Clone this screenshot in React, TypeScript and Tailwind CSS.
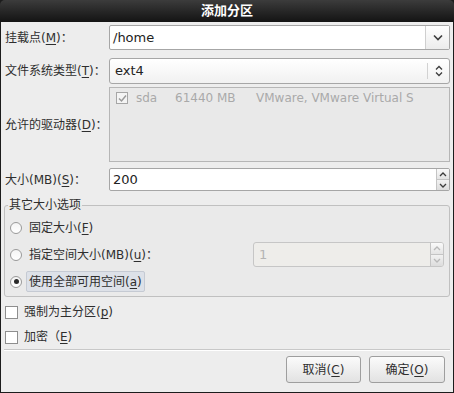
import { useState } from 'react'

const font = { fontFamily: '"DejaVu Sans", "Noto Sans CJK SC", sans-serif' }

function U({ c }: { c: string }) {
  return <span className="underline underline-offset-2">{c}</span>
}

function ChevDown() {
  return (
    <svg width="10" height="7" viewBox="0 0 10 7">
      <path d="M1 1.5 L5 5.5 L9 1.5" fill="none" stroke="#3c3c3c" strokeWidth="1.6" />
    </svg>
  )
}

function ChevUpDown({ color = '#3c3c3c' }: { color?: string }) {
  return (
    <svg width="8" height="12" viewBox="0 0 8 12">
      <path d="M1 4.5 L4 1.5 L7 4.5 M1 7.5 L4 10.5 L7 7.5" fill="none" stroke={color} strokeWidth="1.3" />
    </svg>
  )
}

function Spin({ disabled }: { disabled?: boolean }) {
  const c = disabled ? '#b8b8b8' : '#3c3c3c'
  return (
    <div className="flex flex-col w-[13px] h-full border-l border-[#c4c4c4]">
      <div className="flex-1 flex items-center justify-center bg-gradient-to-b from-[#fafafa] to-[#e4e4e4] border-b border-[#c4c4c4]">
        <svg width="8" height="5" viewBox="0 0 8 5"><path d="M1 4 L4 1 L7 4" fill="none" stroke={c} strokeWidth="1.3" /></svg>
      </div>
      <div className="flex-1 flex items-center justify-center bg-gradient-to-b from-[#f2f2f2] to-[#dcdcdc]">
        <svg width="8" height="5" viewBox="0 0 8 5"><path d="M1 1 L4 4 L7 1" fill="none" stroke={c} strokeWidth="1.3" /></svg>
      </div>
    </div>
  )
}

function Radio({ checked }: { checked?: boolean }) {
  return (
    <span className="w-[12px] h-[12px] rounded-full border border-[#9a9a9a] bg-gradient-to-b from-[#f4f4f4] to-white flex items-center justify-center shrink-0">
      {checked && <span className="w-[5px] h-[5px] rounded-full bg-[#2a2a2a]" />}
    </span>
  )
}

function Check() {
  return <span className="w-[13px] h-[13px] border border-[#8e8e8e] bg-white shrink-0" />
}

export default function App() {
  const [mount] = useState('/home')
  return (
    <div style={font} className="w-[454px] h-[393px] flex flex-col bg-[#1c1c1c] text-[12px] text-[#2e2e2e]">
      <div className="h-[22px] shrink-0 rounded-t-[5px] bg-gradient-to-b from-[#3c3c3c] to-[#141414] flex items-center justify-center text-white font-bold text-[13px]">
        添加分区
      </div>

      <div className="flex-1 flex flex-col bg-[#ededed] mx-px mb-px px-[3px]">
        {/* 挂载点 */}
        <div className="mt-[3px] h-[25px] flex items-center">
          <div className="w-[105px] pl-px">挂载点(<U c="M" />)：</div>
          <div className="flex-1 h-full flex bg-white border border-[#a6a6a6] rounded-[2px]">
            <div className="flex-1 flex items-center pl-[3px] text-[13px] text-[#222]">{mount}</div>
            <div className="w-[24px] border-l border-[#cfcfcf] flex items-center justify-center bg-gradient-to-b from-white to-[#ececec]">
              <ChevDown />
            </div>
          </div>
        </div>

        {/* 文件系统类型 */}
        <div className="mt-[8px] h-[26px] flex items-center">
          <div className="w-[105px] pl-px">文件系统类型(<U c="T" />)：</div>
          <div className="flex-1 h-full flex bg-gradient-to-b from-white to-[#f1f1f1] border border-[#a6a6a6] rounded-[3px]">
            <div className="flex-1 flex items-center pl-[5px] text-[13px] text-[#222]">ext4</div>
            <div className="my-[4px] border-l border-[#d2d2d2]" />
            <div className="w-[21px] flex items-center justify-center">
              <ChevUpDown />
            </div>
          </div>
        </div>

        {/* 驱动器 */}
        <div className="mt-[3px] h-[75px] flex items-center">
          <div className="w-[105px] pl-px">允许的驱动器(<U c="D" />)：</div>
          <div className="flex-1 h-full bg-[#e9e9e9] border border-[#b6b6b6] pl-[6px] pt-[3px] text-[#a9a9a9] text-[12px]">
            <div className="flex items-center h-[14px]">
              <span className="w-[12px] h-[12px] border border-[#a6a6a6] bg-[#f4f4f4] flex items-center justify-center shrink-0">
                <svg width="9" height="9" viewBox="0 0 9 9"><path d="M1 4.5 L3.5 7 L8 1.5" fill="none" stroke="#9a9a9a" strokeWidth="1.5" /></svg>
              </span>
              <span className="ml-[8px] w-[39px]">sda</span>
              <span className="w-[81px]">61440 MB</span>
              <span className="whitespace-nowrap">VMware, VMware Virtual S</span>
            </div>
          </div>
        </div>

        {/* 大小 */}
        <div className="mt-[6px] h-[23px] flex items-center">
          <div className="w-[105px] pl-px">大小(MB)(<U c="S" />)：</div>
          <div className="flex-1 h-full flex bg-white border border-[#a6a6a6] rounded-[2px] overflow-hidden">
            <div className="flex-1 flex items-center pl-[3px] text-[13px] text-[#222]">200</div>
            <Spin />
          </div>
        </div>

        {/* 其它大小选项 */}
        <fieldset className="mt-[7px] h-[99px] border border-[#c0c0c0] rounded-[3px] bg-[#eaeaea]">
          <legend className="ml-[3px] px-px text-[12px] leading-[14px] text-[#2e2e2e]">其它大小选项</legend>
          <div className="pl-[5px] pr-[5px] pt-[2px] flex flex-col">
            <div className="h-[27px] flex items-center gap-[7px]">
              <Radio />
              <span>固定大小(<U c="F" />)</span>
            </div>
            <div className="h-[27px] flex items-center gap-[7px]">
              <Radio />
              <span className="flex-1">指定空间大小(MB)(<U c="u" />)：</span>
              <div className="w-[191px] h-[25px] flex bg-[#eeedea] border border-[#c6c6c6] rounded-[3px] overflow-hidden">
                <div className="flex-1 flex items-center pl-[5px] text-[13px] text-[#b4b4b4]">1</div>
                <Spin disabled />
              </div>
            </div>
            <div className="h-[27px] flex items-center gap-[4px]">
              <Radio checked />
              <span className="px-[2px] h-[21px] flex items-center bg-[#dde1e8] border border-[#c5cad3] rounded-[2px]">
                使用全部可用空间(<U c="a" />)
              </span>
            </div>
          </div>
        </fieldset>

        <div className="mt-[6px] h-[18px] flex items-center gap-[6px] pl-[1px]">
          <Check />
          <span>强制为主分区(<U c="p" />)</span>
        </div>
        <div className="mt-[7px] h-[18px] flex items-center gap-[6px] pl-[1px]">
          <Check />
          <span>加密（<U c="E" />)</span>
        </div>

        <div className="mt-[3px] border-t border-[#c8c8c8] border-b border-b-white" />

        <div className="mt-[5px] flex justify-end gap-[8px] pr-[5px]">
          <button className="w-[75px] h-[27px] border border-[#9e9e9e] rounded-[3px] bg-gradient-to-b from-[#fbfbfb] to-[#e2e2e2] text-[12px] text-[#2e2e2e]">
            取消(<U c="C" />)
          </button>
          <button className="w-[76px] h-[27px] border border-[#9e9e9e] rounded-[3px] bg-gradient-to-b from-[#fbfbfb] to-[#e2e2e2] text-[12px] text-[#2e2e2e]">
            确定(<U c="O" />)
          </button>
        </div>
      </div>
    </div>
  )
}
